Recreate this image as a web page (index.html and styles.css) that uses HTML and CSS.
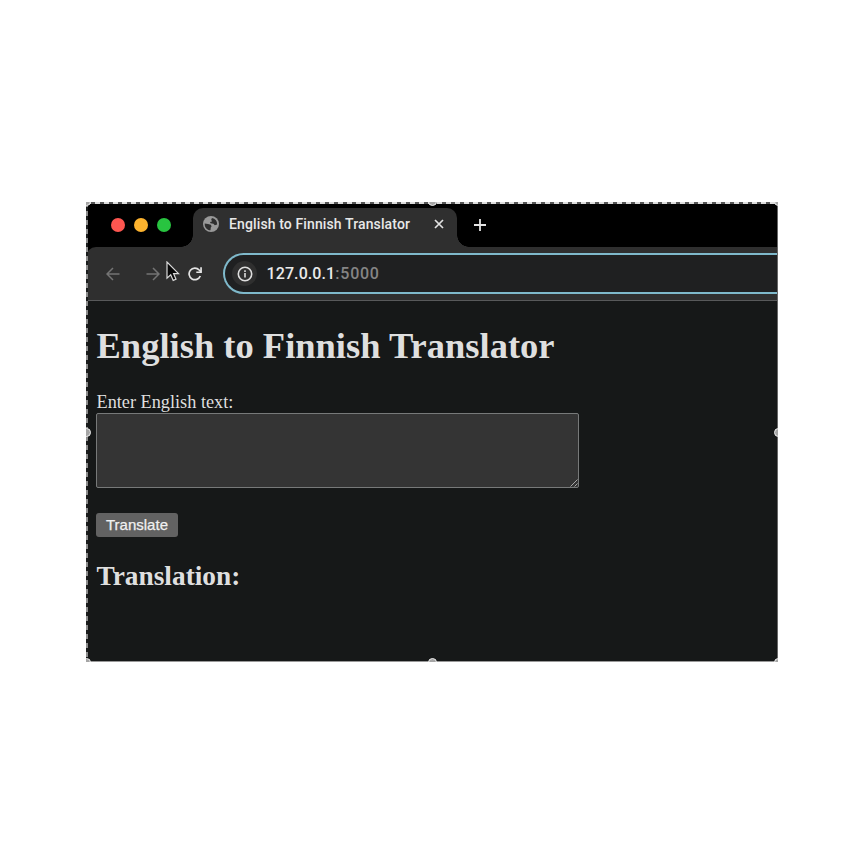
FILE: index.html
```
<!DOCTYPE html>
<html lang="en">
<head>
<meta charset="utf-8">
<title>English to Finnish Translator</title>
<link rel="stylesheet" href="styles.css">
</head>
<body>
<div class="window">
  <div class="tabstrip">
    <div class="lights"><i class="light red"></i><i class="light amber"></i><i class="light green"></i></div>
    <div class="tab">
      <svg class="globe" width="16" height="16" viewBox="0 0 16 16"><circle cx="8" cy="8" r="8" fill="#999"/><path d="M1.7 7.4 5 8l2.8.8.8 1.5-.8 1.3-.3 2.7C3.8 14 1.5 11.2 1.7 7.4ZM9 1.9A6.3 6.3 0 0 1 14.2 8.6L11.8 9.2 10.4 7.8 7.5 7.3 7 6 9 5.5 8.2 3.6Z" fill="#2f2f2f"/></svg>
      <span class="tab-title">English to Finnish Translator</span>
      <svg class="close" width="10" height="10" viewBox="0 0 10 10"><path d="m1 1 8 8M9 1 1 9" stroke="#e2e2e2" stroke-width="1.7"/></svg>
    </div>
    <svg class="plus" width="12" height="12" viewBox="0 0 12 12"><path d="M6 0v12M0 6h12" stroke="#e4e4e4" stroke-width="1.8"/></svg>
  </div>
  <div class="toolbar">
    <svg class="back" width="14" height="14" viewBox="0 0 14 14"><path d="M13.5 7H1M7 1 1 7l6 6" fill="none" stroke="#747474" stroke-width="1.5"/></svg>
    <svg class="forward" width="14" height="14" viewBox="0 0 14 14"><path d="M.5 7H13M7 1l6 6-6 6" fill="none" stroke="#747474" stroke-width="1.5"/></svg>
    <svg class="reload" width="14" height="14" viewBox="0 0 14 14"><path d="M12.3 9A5.8 5.8 0 1 1 11.2 3L13 4.8" fill="none" stroke="#e4e4e4" stroke-width="1.7"/><path d="M13.9.3v5.6H8.3V4.5h3.9V.3Z" fill="#e4e4e4"/></svg>
    <div class="address">
      <span class="info"><svg width="16" height="16" viewBox="0 0 16 16"><circle cx="8" cy="8" r="6.7" fill="none" stroke="#dedede" stroke-width="1.6"/><path d="M8 7v4.5M8 4.2v1.7" stroke="#dedede" stroke-width="1.6"/></svg></span>
      <span class="url">127.0.0.1<span class="port">:5000</span></span>
    </div>
  </div>
  <main class="page">
    <h1>English to Finnish Translator</h1>
    <label for="text">Enter English text:</label>
    <div class="field"><textarea id="text"></textarea><svg class="grip" width="9" height="9" viewBox="0 0 9 9"><path d="M1.5 8.5l7-7M5.5 8.5l3-3" stroke="#a8a8a8"/></svg></div>
    <button type="button">Translate</button>
    <h2>Translation:</h2>
  </main>
  <div class="edge edge-top"></div><div class="edge edge-left"></div><div class="edge edge-right"></div><div class="edge edge-bottom"></div>
  <i class="handle tl"></i><i class="handle tc"></i><i class="handle tr"></i><i class="handle ml"></i><i class="handle mr"></i><i class="handle bl"></i><i class="handle bc"></i><i class="handle br"></i>
  <svg class="cursor" width="14" height="21" viewBox="0 0 14 21"><path d="M1 1v16.2l3.7-3.4 2.5 5.6 2.8-1.2-2.4-5.5h4.9Z" fill="#080808" stroke="#dadada" stroke-width="1.2"/></svg>
</div>
</body>
</html>
```
FILE: styles.css
```
* { box-sizing: border-box; }
body { margin: 0; height: 864px; background: #fff; overflow: hidden; }
svg { display: block; flex: none; }
.window {
  position: relative;
  width: 692px;
  height: 460px;
  margin: 202px 0 0 86px;
  overflow: hidden;
  background: #161818;
  color: #dfdfdf;
}
.tabstrip { display: flex; height: 45px; background: #000; }
.lights { display: flex; gap: 9px; width: 107px; padding: 15.5px 0 0 25.4px; }
.light { width: 14px; height: 14px; border-radius: 50%; }
.red { background: #fe5650; }
.amber { background: #fdb32e; }
.green { background: #28c440; }
.tab {
  position: relative;
  display: flex;
  align-items: center;
  width: 264px;
  height: 39px;
  margin-top: 6px;
  padding: 0 13px 7px 10px;
  border-radius: 10px 10px 0 0;
  background: #2f2f2f;
}
.tab::before, .tab::after {
  content: "";
  position: absolute;
  bottom: 0;
  width: 12px;
  height: 12px;
}
.tab::before { left: -12px; background: radial-gradient(circle at 0 0, transparent 11.5px, #2f2f2f 12px); }
.tab::after { right: -12px; background: radial-gradient(circle at 100% 0, transparent 11.5px, #2f2f2f 12px); }
.tab-title {
  width: 205px;
  margin-left: 10px;
  white-space: nowrap;
  font: 500 14px/18px Roboto, sans-serif;
  letter-spacing: 0.12px;
  color: #e8e8e8;
}
.plus { margin: 16.5px 0 0 17px; }
.toolbar {
  display: flex;
  align-items: center;
  height: 54px;
  padding-left: 20px;
  border-bottom: 1px solid #58595a;
  border-radius: 10px 0 0 0;
  background: #2f2f2f;
  box-shadow: 0 -10px 0 #000;
}
.forward { margin-left: 26px; }
.reload { margin-left: 28px; }
.address {
  display: flex;
  align-items: center;
  flex: 1;
  height: 41px;
  margin-left: 21px;
  padding-left: 7px;
  border: 2px solid #7fb9cb;
  border-right: 0;
  border-radius: 21px 0 0 21px;
  background: #1f2021;
}
.info {
  display: grid;
  place-items: center;
  width: 25px;
  height: 25px;
  border-radius: 50%;
  background: #2f2f2f;
}
.url {
  margin-left: 9.5px;
  font: 500 16px/20px Roboto, sans-serif;
  letter-spacing: 0.1px;
  color: #eaeaea;
}
.port { color: #858585; letter-spacing: 0.75px; }
.page { padding: 22px 0 0 10px; font-family: "Liberation Serif", serif; }
h1 { margin: 0; font-size: 36.5px; line-height: 46px; white-space: nowrap; }
label { display: block; margin-top: 22px; font-size: 18.25px; line-height: 22px; }
h1, h2, label { text-indent: 0.5px; }
.field { position: relative; width: 483px; height: 75px; }
textarea {
  display: block;
  width: 100%;
  height: 100%;
  border: 1px solid #777979;
  border-radius: 2px;
  background: #343434;
  resize: none;
  outline: none;
}
.grip { position: absolute; right: 1px; bottom: 1px; }
button {
  display: block;
  width: 82px;
  height: 24px;
  margin-top: 25px;
  padding: 0;
  border: 0;
  border-radius: 3px;
  background: #626262;
  color: #f0f0f0;
  font: 15px/24px "Liberation Sans", sans-serif;
  -webkit-text-stroke: 0.25px #f0f0f0;
}
h2 { margin: 23px 0 0; font-size: 27.35px; line-height: 32px; }
.edge { position: absolute; }
.edge-top { inset: 0 0 auto; height: 2px; background: repeating-linear-gradient(90deg, #ddd 0 5px, #555 5px 9px); }
.edge-left { inset: 0 auto 0 0; width: 2px; background: repeating-linear-gradient(#8c8c8c 0 5px, #1b1d1d 5px 9px); }
.edge-right { inset: 0 0 0 auto; width: 1px; background: #666; }
.edge-bottom { inset: auto 0 0; height: 1px; background: #999; }
.handle {
  position: absolute;
  width: 9px;
  height: 9px;
  border: 1px solid #ececec;
  border-radius: 50%;
  background: #a5a5a5;
}
.tl, .tc, .tr { top: -5px; }
.ml, .mr { top: 226px; }
.bl, .bc, .br { bottom: -5px; }
.tl, .ml, .bl { left: -4px; }
.tc, .bc { left: 342px; }
.tr, .mr, .br { right: -5px; }
.cursor { position: absolute; left: 80px; top: 59px; }
```
